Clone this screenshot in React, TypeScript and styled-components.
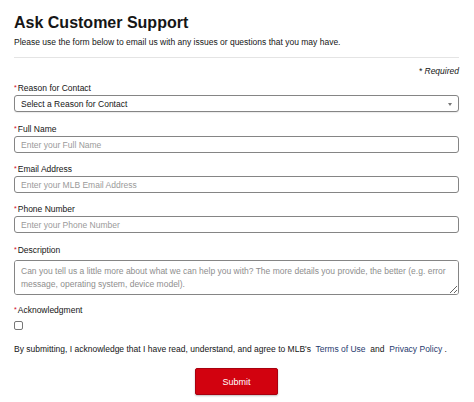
import React from "react";
import styled, { createGlobalStyle } from "styled-components";

const GlobalStyle = createGlobalStyle`
  html, body {
    margin: 0;
    padding: 0;
    background: #ffffff;
  }
  body {
    font-family: "Liberation Sans", Arial, Helvetica, sans-serif;
    color: #151515;
  }
`;

const Page = styled.div`
  width: 474px;
  height: 402px;
  box-sizing: border-box;
  padding: 0 15px 0 14px;
  overflow: hidden;
`;

const Title = styled.h1`
  margin: 13px 0 0;
  font-size: 16px;
  line-height: 20px;
  font-weight: 700;
  color: #161616;
`;

const Intro = styled.p`
  margin: 3px 0 0;
  font-size: 8.5px;
  line-height: 12px;
  color: #151515;
`;

const Divider = styled.hr`
  margin: 9px 0 0;
  border: 0;
  border-top: 1px solid #e4e4e4;
`;

const Required = styled.div`
  margin-top: 7px;
  text-align: right;
  font-size: 8.5px;
  line-height: 12px;
  font-style: italic;
  color: #151515;
`;

const Form = styled.form`
  display: flex;
  flex-direction: column;
  margin-top: 5px;
`;

const Field = styled.div<{ $gap?: number; $top?: number }>`
  display: flex;
  flex-direction: column;
  margin-top: ${(p) => p.$top ?? 0}px;
  margin-bottom: ${(p) => p.$gap ?? 10}px;
`;

const Label = styled.label`
  display: block;
  font-size: 8.5px;
  line-height: 12px;
  color: #151515;
  margin-bottom: 1px;
`;

const Star = styled.span`
  color: #d0021b;
  font-size: 7px;
  vertical-align: 1px;
  margin-right: 1px;
`;

const boxStyles = `
  box-sizing: border-box;
  width: 100%;
  border: 1px solid #858585;
  border-radius: 3px;
  background: #fff;
  font-family: "Liberation Sans", Arial, Helvetica, sans-serif;
  font-size: 8.5px;
  color: #151515;
  padding: 0 6px;
  outline: none;
`;

const Input = styled.input`
  ${boxStyles}
  height: 17px;
  &::placeholder {
    color: #9a9a9a;
  }
`;

const SelectBox = styled.div`
  ${boxStyles}
  position: relative;
  height: 17px;
  display: flex;
  align-items: center;
  box-shadow: 0 1px 1px rgba(0, 0, 0, 0.08);
`;

const Caret = styled.span`
  position: absolute;
  right: 6px;
  top: 7px;
  width: 0;
  height: 0;
  border-left: 2.5px solid transparent;
  border-right: 2.5px solid transparent;
  border-top: 3px solid #777;
`;

const TextArea = styled.textarea`
  ${boxStyles}
  height: 35px;
  margin-top: 3px;
  padding: 4px 6px;
  line-height: 13px;
  resize: vertical;
  &::placeholder {
    color: #8e8e8e;
  }
`;

const Check = styled.span`
  display: block;
  box-sizing: border-box;
  width: 9px;
  height: 9px;
  margin-top: 4px;
  border: 1px solid #777;
  border-radius: 2px;
  background: #fff;
`;

const Legal = styled.p`
  margin: 13px 0 0;
  font-size: 8.5px;
  line-height: 12px;
  color: #151515;
  white-space: pre;
`;

const Link = styled.a`
  color: #1f3a6e;
  text-decoration: none;
`;

const Actions = styled.div`
  display: flex;
  justify-content: center;
  margin-top: 13px;
`;

const Submit = styled.button`
  width: 83px;
  height: 27px;
  border: 1px solid #a8000f;
  border-radius: 2px;
  background: #d2020f;
  color: #fff;
  font-family: "Liberation Sans", Arial, Helvetica, sans-serif;
  font-size: 9px;
  cursor: pointer;
  box-shadow: 0 1px 2px rgba(0, 0, 0, 0.25);
`;

const fields = [
  { label: "Full Name", placeholder: "Enter your Full Name" },
  { label: "Email Address", placeholder: "Enter your MLB Email Address" },
  { label: "Phone Number", placeholder: "Enter your Phone Number" },
];

export default function App() {
  return (
    <>
      <GlobalStyle />
      <Page>
        <Title>Ask Customer Support</Title>
        <Intro>
          Please use the form below to email us with any issues or questions that you may have.
        </Intro>
        <Divider />
        <Required>* Required</Required>
        <Form onSubmit={(e) => e.preventDefault()}>
          <Field $gap={11}>
            <Label>
              <Star>*</Star>Reason for Contact
            </Label>
            <SelectBox>
              Select a Reason for Contact
              <Caret />
            </SelectBox>
          </Field>
          {fields.map((f) => (
            <Field key={f.label}>
              <Label>
                <Star>*</Star>
                {f.label}
              </Label>
              <Input placeholder={f.placeholder} />
            </Field>
          ))}
          <Field $gap={0} $top={1}>
            <Label>
              <Star>*</Star>Description
            </Label>
            <TextArea placeholder="Can you tell us a little more about what we can help you with? The more details you provide, the better (e.g. error message, operating system, device model)." />
          </Field>
          <Field $gap={0} $top={9}>
            <Label>
              <Star>*</Star>Acknowledgment
            </Label>
            <Check />
          </Field>
          <Legal>
            By submitting, I acknowledge that I have read, understand, and agree to MLB's{"  "}
            <Link href="#">Terms of Use</Link>
            {"  and  "}
            <Link href="#">Privacy Policy</Link> .
          </Legal>
          <Actions>
            <Submit type="submit">Submit</Submit>
          </Actions>
        </Form>
      </Page>
    </>
  );
}
